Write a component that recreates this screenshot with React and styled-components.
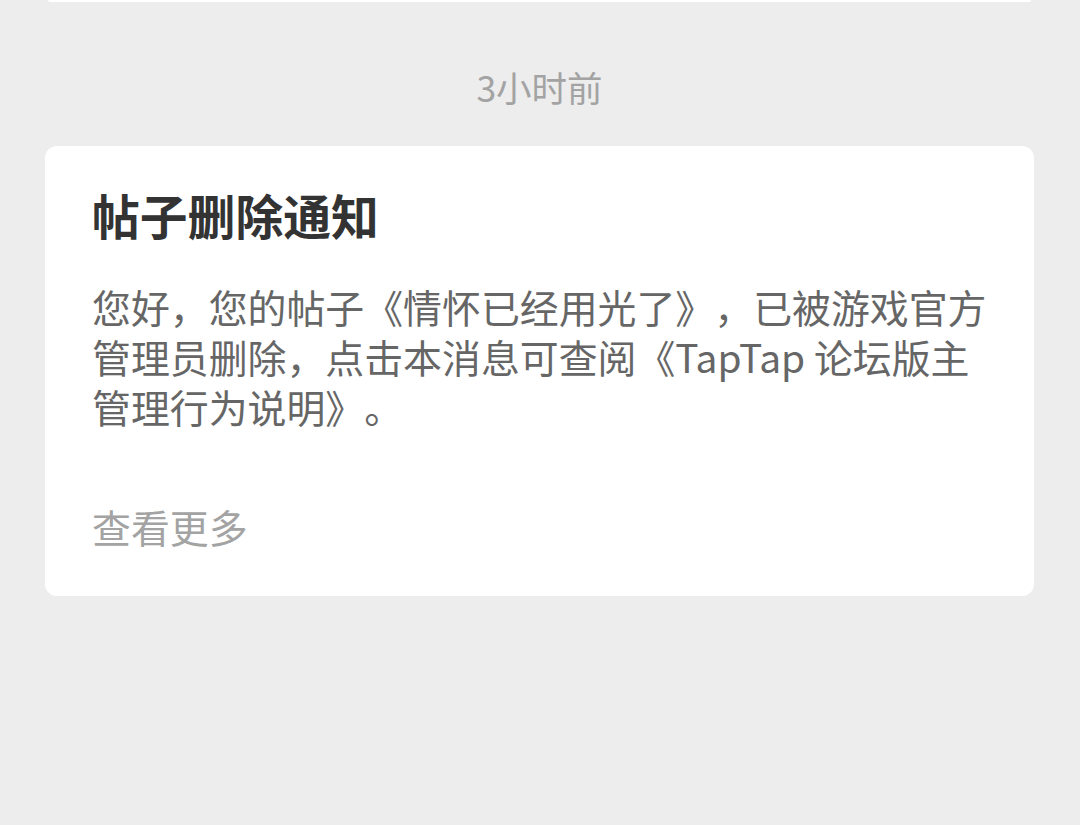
import React from "react";
import styled, { createGlobalStyle } from "styled-components";

const GlobalStyle = createGlobalStyle`
	body {
		margin: 0;
		background: #ededed;
		font-family: "Noto Sans CJK SC", "Noto Sans", sans-serif;
		text-spacing-trim: space-all;
	}
`;

const Page = styled.div`
	display: flex;
	flex-direction: column;
	padding: 0 46px 0 45px;
	min-height: 825px;
	box-sizing: border-box;
`;

const PrevCard = styled.div`
	height: 2px;
	margin: 0 3px;
	background: #ffffff;
	border-radius: 0 0 12px 12px;
`;

const Time = styled.div`
	margin-top: 60px;
	text-align: center;
	font-size: 35.5px;
	line-height: 50px;
	color: #a3a3a3;
`;

const Card = styled.div`
	margin-top: 34px;
	background: #ffffff;
	border-radius: 12px;
	padding: 39px 44px 45px 47px;
`;

const Title = styled.h2`
	margin: 0;
	font-size: 47.8px;
	line-height: 60px;
	font-weight: 700;
	color: #333333;
`;

const Body = styled.p`
	margin: 36px 0 0;
	font-size: 38.9px;
	line-height: 50px;
	color: #666666;
`;

const More = styled.div`
	margin-top: 70px;
	font-size: 38.9px;
	line-height: 50px;
	color: #a3a3a3;
`;

function NoticeCard({ title, text }) {
	return (
		<Card>
			<Title>{title}</Title>
			<Body>{text}</Body>
			<More>查看更多</More>
		</Card>
	);
}

export default function App() {
	return (
		<>
			<GlobalStyle />
			<Page>
				<PrevCard />
				<Time>3小时前</Time>
				<NoticeCard
					title="帖子删除通知"
					text="您好，您的帖子《情怀已经用光了》，已被游戏官方管理员删除，点击本消息可查阅《TapTap 论坛版主管理行为说明》。"
				/>
			</Page>
		</>
	);
}
